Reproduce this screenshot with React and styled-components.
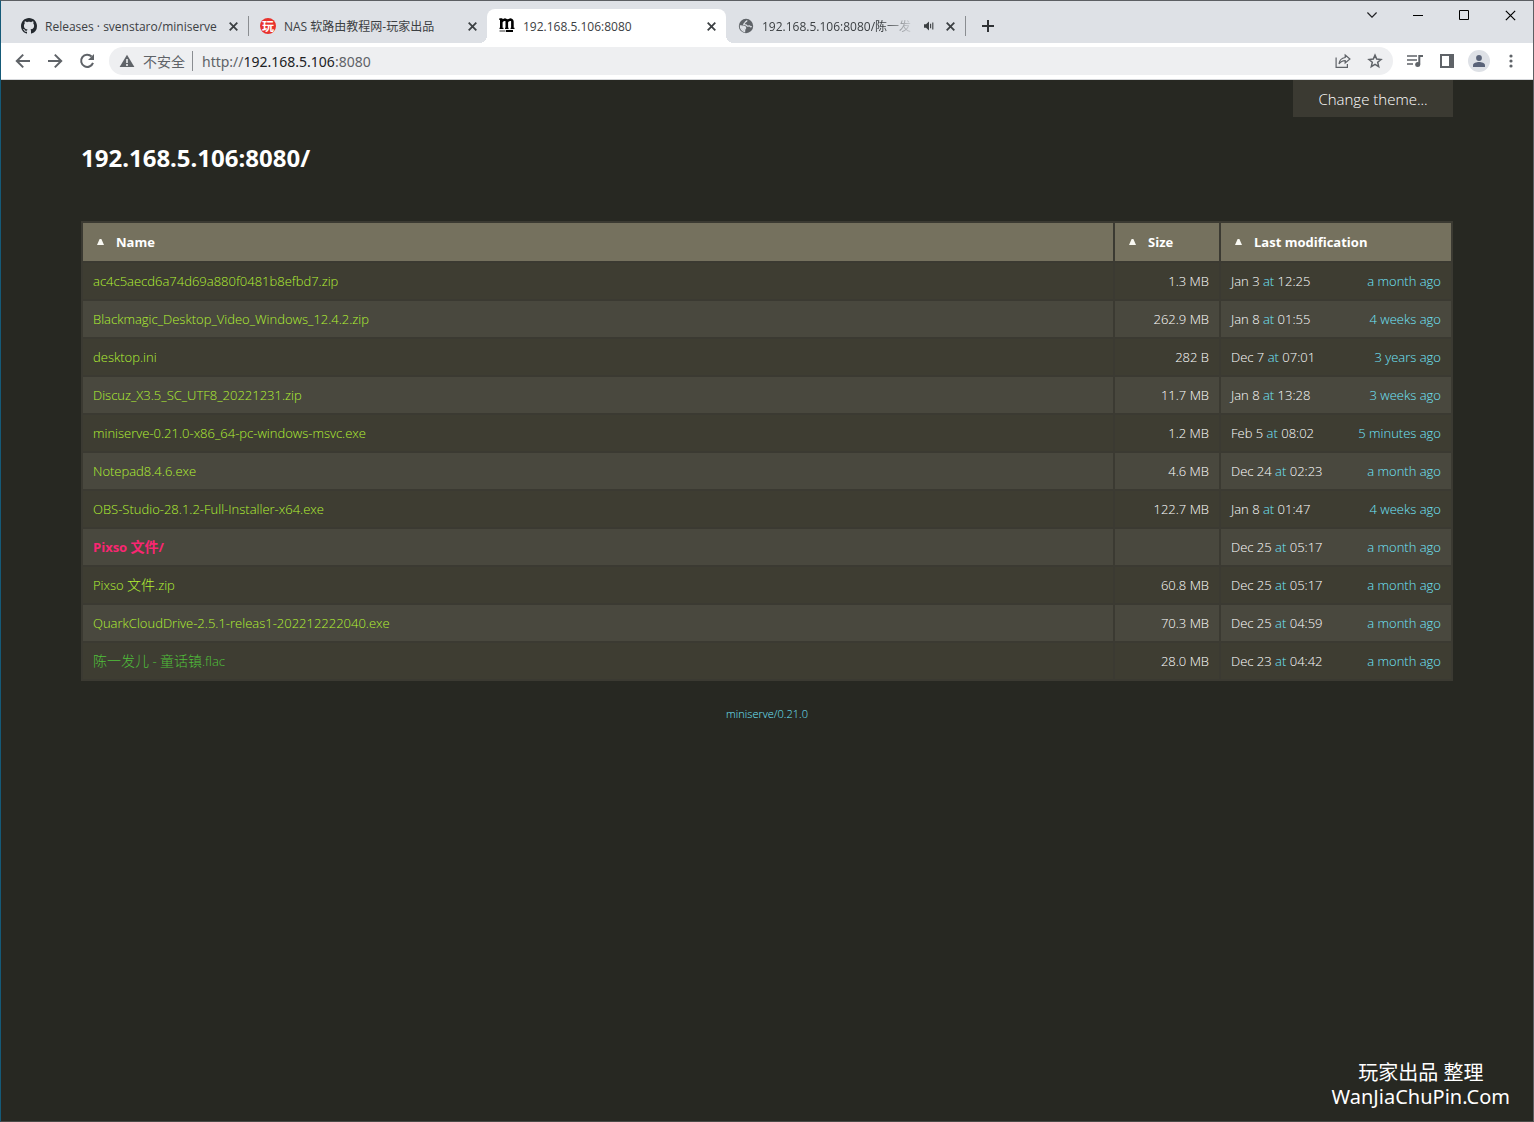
import React from 'react';
import styled, { createGlobalStyle, css } from 'styled-components';

const GlobalStyle = createGlobalStyle`
  * {
    box-sizing: border-box;
  }

  body {
    margin: 0;
    background: #272822;
    font-family: 'Open Sans', 'Noto Sans CJK SC', sans-serif;
  }

  button {
    padding: 0;
    border: 0;
    background: none;
    color: inherit;
    font: inherit;
    cursor: pointer;
  }

  a {
    text-decoration: none;
  }

  svg {
    display: block;
    flex: none;
  }
`;

const Window = styled.div`
  position: relative;
  display: flex;
  flex-direction: column;
  min-height: 100vh;
  border: 1px solid #5c5f63;
  border-left-color: #155a78;
  border-bottom-color: #4b4b48;
`;

const TabStrip = styled.header`
  display: flex;
  height: 42px;
  padding: 8px 0 0 8px;
  background: #dee1e6;
`;

const tabActive = css`
  background: #fff;
  border-radius: 8px 8px 0 0;

  &:before,
  &:after {
    content: '';
    position: absolute;
    bottom: 0;
    width: 8px;
    height: 8px;
  }

  &:before {
    right: 100%;
    background: radial-gradient(circle at 0 0, transparent 8px, #fff 8px);
  }

  &:after {
    left: 100%;
    background: radial-gradient(circle at 100% 0, transparent 8px, #fff 8px);
  }
`;

const Tab = styled.div`
  position: relative;
  display: flex;
  align-items: center;
  width: 239px;
  height: 34px;
  padding: 0 9px 0 12px;
  color: #3c4043;
  ${({ $active }) => $active && tabActive}
`;

const TabTitle = styled.span`
  flex: 1;
  margin: 0 8px;
  overflow: hidden;
  font-size: 12px;
  white-space: nowrap;
  ${({ $fade }) =>
    $fade && 'mask-image: linear-gradient(to right, #000 calc(100% - 32px), transparent);'}
`;

const TabButton = styled.button`
  display: flex;
  align-items: center;
  justify-content: center;
  width: 12px;
  height: 16px;
  margin-left: ${({ $gap }) => $gap || 0}px;
`;

const Divider = styled.span`
  align-self: center;
  width: 1px;
  height: 20px;
  margin: ${({ $margin }) => $margin || '0'};
  background: #8a8d91;
`;

const TabDivider = styled(Divider)`
  position: absolute;
  right: -1px;
`;

const NewTab = styled.button`
  display: flex;
  align-items: center;
  justify-content: center;
  width: 28px;
  height: 34px;
  margin-left: 9px;
`;

const WindowControls = styled.div`
  display: flex;
  height: 12px;
  margin-left: auto;

  button {
    display: flex;
    align-items: center;
    justify-content: center;
    width: 46px;
  }
`;

const Toolbar = styled.div`
  display: flex;
  align-items: center;
  height: 37px;
  padding: 0 6px;
  border-bottom: 1px solid #d5d7da;
  background: #fff;
  color: #5f6368;
`;

const ToolButton = styled.button`
  display: flex;
  align-items: center;
  justify-content: center;
  width: 32px;
  height: 28px;
`;

const Avatar = styled.span`
  display: flex;
  align-items: center;
  justify-content: center;
  width: 22px;
  height: 22px;
  border-radius: 50%;
  background: #dee1e6;
`;

const Omnibox = styled.div`
  display: flex;
  flex: 1;
  align-items: center;
  height: 28px;
  margin: 0 6px;
  padding: 0 2px 0 10px;
  border-radius: 14px;
  background: #eeeff1;
  font-size: 14px;
`;

const Security = styled.span`
  margin-left: 8px;
`;

const Address = styled.span`
  flex: 1;
  font-family: 'Noto Sans', sans-serif;

  b {
    color: #202124;
    font-weight: 400;
  }
`;

const Page = styled.main`
  flex: 1;
  padding: 0 80px;
  background: #272822;
  color: #fff;
`;

const ThemeButton = styled.button`
  display: block;
  width: 160px;
  height: 37px;
  margin-left: auto;
  background: #3b3a32;
  font-size: 15px;
  font-weight: 300;
`;

const Title = styled.h1`
  margin: 23px 0 45px;
  font-family: 'Noto Sans', sans-serif;
  font-size: 24px;
  font-weight: 700;
  line-height: 36px;
`;

const FileTable = styled.table`
  width: 100%;
  border-spacing: 2px;
  table-layout: fixed;
  background: #3b3a32;
  font-size: 13px;
  font-weight: 300;
  line-height: 20px;

  th {
    height: 38px;
    padding: 0 14px;
    background: #75715e;
    font-weight: 700;
    text-align: left;
  }

  td {
    height: 36px;
    padding: 0 10px;
  }

  tbody tr {
    background: #3e3d32;
  }

  tbody tr:nth-child(even) {
    background: #49483e;
  }
`;

const Column = styled.col`
  width: ${({ $width }) => $width};
`;

const SortButton = styled.button`
  display: flex;
  align-items: center;
  gap: 12px;
`;

const linkColors = {
  file: '#b2f032',
  directory: '#f92672',
  visited: '#50c03a',
};

const FileLink = styled.a`
  color: ${({ $kind }) => linkColors[$kind]};
  font-weight: ${({ $kind }) => ($kind === 'directory' ? 700 : 300)};
`;

const Han = styled.span`
  font-size: 14px;
`;

const SizeCell = styled.td`
  text-align: right;
`;

const Modified = styled.div`
  display: flex;
  justify-content: space-between;
`;

const Muted = styled.span`
  color: #70e6fc;
`;

const Footer = styled.footer`
  padding-top: 24px;
  font-size: 11px;
  font-weight: 300;
  line-height: 18px;
  text-align: center;

  a {
    color: #70e6fc;
  }
`;

const Watermark = styled.div`
  position: absolute;
  right: 23px;
  bottom: 12px;
  color: #fff;
  font-family: 'Noto Sans', 'Noto Sans CJK SC', sans-serif;
  font-size: 20px;
  line-height: 24px;
  text-align: center;
`;

const CloseIcon = ({ size = 9, width = 1.8 }) => (
  <svg width={size} height={size} viewBox="0 0 9 9" fill="none" stroke="currentColor">
    <path d="M.7.7l7.6 7.6M8.3.7L.7 8.3" strokeWidth={width} />
  </svg>
);

const GithubIcon = () => (
  <svg width="16" height="16" viewBox="0 0 16 16" fill="#24292f">
    <path d="M8 0C3.58 0 0 3.58 0 8c0 3.54 2.29 6.53 5.47 7.59.4.07.55-.17.55-.38 0-.19-.01-.82-.01-1.49-2.01.37-2.53-.49-2.69-.94-.09-.23-.48-.94-.82-1.13-.28-.15-.68-.52-.01-.53.63-.01 1.08.58 1.23.82.72 1.21 1.87.87 2.33.66.07-.52.28-.87.51-1.07-1.78-.2-3.64-.89-3.64-3.95 0-.87.31-1.59.82-2.15-.08-.2-.36-1.02.08-2.12 0 0 .67-.21 2.2.82.64-.18 1.32-.27 2-.27s1.36.09 2 .27c1.53-1.04 2.2-.82 2.2-.82.44 1.1.16 1.92.08 2.12.51.56.82 1.27.82 2.15 0 3.07-1.87 3.75-3.65 3.95.29.25.54.73.54 1.48 0 1.07-.01 1.93-.01 2.2 0 .21.15.46.55.38A8.01 8.01 0 0 0 16 8c0-4.42-3.58-8-8-8z" />
  </svg>
);

const NasIcon = styled.span`
  display: flex;
  align-items: center;
  justify-content: center;
  width: 16px;
  height: 16px;
  border-radius: 50%;
  background: #e8322d;
  color: #fff;
  font-family: 'Noto Sans CJK SC', sans-serif;
  font-size: 12px;
  font-weight: 700;
  line-height: 16px;
`;

const MiniserveIcon = () => (
  <svg width="16" height="16" viewBox="0 0 16 16" fill="none" stroke="#000">
    <path
      d="M2.3.5v10M2.3 4C3.500 1.200 7.600.8 7.800 3.500v7M7.800 4C9 1.200 13.200.8 13.400 3.500v7"
      strokeWidth="2.6"
    />
    <path d="M0 1.100h3M.5 10.300h4M6 10.300h3.600M11.600 10.300h3.900" strokeWidth="1.2" />
    <path d="M.5 13h6" stroke="#999" strokeWidth="2" />
    <path d="M7 13h7" strokeWidth="2" />
  </svg>
);

const GlobeIcon = () => (
  <svg width="16" height="16" viewBox="0 0 16 16">
    <circle cx="8" cy="8" r="7.2" fill="#5f6368" />
    <path
      d="M2.4 7.800c1.300.1 2.400.3 3.600.6 1 .2 1.800.7 1.700 1.600-.1.800-.9.900-1 1.700l-.1 1.900A5.900 5.900 0 0 1 2.400 7.800zM9 2.400c-.1.900-.7 1.300-1.400 1.500-.7.300-.5 1-1 1.300-.5.400-1 .8-.9 1.200.3.600 1.500.2 2.300.5.800.2.8 1.100 1.600 1.300.9.100 1.200-.5 1.900-.3.700.1.600 1 1.300.9.400 0 .6-.2.800-.6"
      fill="none"
      stroke="#dee1e6"
      strokeWidth="1.2"
    />
    <path d="M2.6 8l4.600 1-.8 4.200A5.800 5.800 0 0 1 2.600 8z" fill="#dee1e6" />
  </svg>
);

const SpeakerIcon = () => (
  <svg width="12" height="12" viewBox="0 0 12 12" fill="none" stroke="currentColor">
    <path d="M1 4.2h2L6 1.5v9L3 7.8H1z" fill="currentColor" stroke="none" />
    <path d="M7.6 3.8v4.4M9.8 2.6v6.8" strokeWidth="1.1" />
  </svg>
);

const PlusIcon = () => (
  <svg width="12" height="12" viewBox="0 0 12 12" stroke="#2f3235" strokeWidth="2">
    <path d="M6 0v12M0 6h12" />
  </svg>
);

const BackIcon = () => (
  <svg width="16" height="16" viewBox="0 0 16 16" fill="none" stroke="#5f6368" strokeWidth="2">
    <path d="M15 8H2M8.2 1.6L1.8 8l6.4 6.4" />
  </svg>
);

const ForwardIcon = () => (
  <svg width="16" height="16" viewBox="0 0 16 16" fill="none" stroke="#5f6368" strokeWidth="2">
    <path d="M1 8h13M7.8 1.6L14.2 8l-6.4 6.4" />
  </svg>
);

const ReloadIcon = () => (
  <svg width="16" height="16" viewBox="0 0 16 16">
    <path d="M12.6 3.5A6.1 6.1 0 1 0 14 9.8" fill="none" stroke="#5f6368" strokeWidth="2" />
    <path d="M15 1v6H9z" fill="#5f6368" />
  </svg>
);

const WarningIcon = () => (
  <svg width="16" height="16" viewBox="0 0 16 16">
    <path d="M8 1.8L15.4 14H.6z" fill="#5f6368" />
    <path d="M8 6v4M8 11v2" stroke="#eeeff1" strokeWidth="1.6" />
  </svg>
);

const ShareIcon = () => (
  <svg width="16" height="16" viewBox="0 0 16 16" fill="none" stroke="#5f6368" strokeWidth="1.2">
    <path d="M1.1 4.5v9.900h11.300V11" />
    <path d="M10.2 2l4.7 4-4.7 4V7.600C7.400 7.600 5.600 8.500 4 10.900c.4-3.600 2.700-5.900 6.200-6.400z" />
  </svg>
);

const StarIcon = () => (
  <svg width="16" height="16" viewBox="0 0 16 16" fill="none" stroke="#5f6368" strokeWidth="1.5">
    <path d="M8 2.1l1.7 4 4.3.4-3.3 2.8 1 4.3L8 11.3l-3.7 2.3 1-4.3L2 6.500l4.3-.4z" />
  </svg>
);

const PlaylistIcon = () => (
  <svg width="16" height="16" viewBox="0 0 16 16" fill="none" stroke="#5f6368" strokeWidth="2">
    <path d="M0 3h10M0 7h10M0 11h6" strokeWidth="1.6" />
    <path d="M12.3 11.5V3H16" />
    <circle cx="10.7" cy="11.5" r="2.5" fill="#5f6368" stroke="none" />
  </svg>
);

const SidePanelIcon = () => (
  <svg width="14" height="14" viewBox="0 0 14 14">
    <path d="M0 0h14v14H0zM2 2v10h7V2z" fill="#5f6368" fillRule="evenodd" />
  </svg>
);

const PersonIcon = () => (
  <svg width="12" height="12" viewBox="0 0 12 12" fill="#5a6378">
    <circle cx="6" cy="3" r="2.9" />
    <path d="M0 12v-1.800C0 8 3.500 7 6 7s6 1 6 3.200V12z" />
  </svg>
);

const MenuIcon = () => (
  <svg width="4" height="14" viewBox="0 0 4 14" fill="#5f6368">
    <circle cx="2" cy="2" r="1.6" />
    <circle cx="2" cy="7" r="1.6" />
    <circle cx="2" cy="12" r="1.6" />
  </svg>
);

const ChevronIcon = () => (
  <svg width="10" height="6" viewBox="0 0 10 6" fill="none" stroke="#202124" strokeWidth="1.2">
    <path d="M.4.5L5 5.200 9.600.5" />
  </svg>
);

const MinimizeIcon = () => (
  <svg width="10" height="10" viewBox="0 0 10 10" fill="#000">
    <path d="M0 5h10v1H0z" />
  </svg>
);

const MaximizeIcon = () => (
  <svg width="10" height="10" viewBox="0 0 10 10" fill="none" stroke="#000">
    <path d="M.5.5h9v9h-9z" />
  </svg>
);

const SortIcon = () => (
  <svg width="7" height="6" viewBox="0 0 7 6" fill="#f8f8f2">
    <path d="M2.600 0h1.800L7 6H0z" />
  </svg>
);

const tabs = [
  { title: 'Releases · svenstaro/miniserve', icon: <GithubIcon />, divider: true },
  { title: 'NAS 软路由教程网-玩家出品', icon: <NasIcon>玩</NasIcon> },
  { title: '192.168.5.106:8080', icon: <MiniserveIcon />, active: true },
  {
    title: '192.168.5.106:8080/陈一发',
    icon: <GlobeIcon />,
    divider: true,
    audio: true,
  },
];

const files = [
  ['ac4c5aecd6a74d69a880f0481b8efbd7.zip', '1.3 MB', 'Jan 3', '12:25', 'a month ago'],
  ['Blackmagic_Desktop_Video_Windows_12.4.2.zip', '262.9 MB', 'Jan 8', '01:55', '4 weeks ago'],
  ['desktop.ini', '282 B', 'Dec 7', '07:01', '3 years ago'],
  ['Discuz_X3.5_SC_UTF8_20221231.zip', '11.7 MB', 'Jan 8', '13:28', '3 weeks ago'],
  ['miniserve-0.21.0-x86_64-pc-windows-msvc.exe', '1.2 MB', 'Feb 5', '08:02', '5 minutes ago'],
  ['Notepad8.4.6.exe', '4.6 MB', 'Dec 24', '02:23', 'a month ago'],
  ['OBS-Studio-28.1.2-Full-Installer-x64.exe', '122.7 MB', 'Jan 8', '01:47', '4 weeks ago'],
  ['Pixso 文件/', '', 'Dec 25', '05:17', 'a month ago', 'directory'],
  ['Pixso 文件.zip', '60.8 MB', 'Dec 25', '05:17', 'a month ago'],
  ['QuarkCloudDrive-2.5.1-releas1-202212222040.exe', '70.3 MB', 'Dec 25', '04:59', 'a month ago'],
  ['陈一发儿 - 童话镇.flac', '28.0 MB', 'Dec 23', '04:42', 'a month ago', 'visited'],
];

const columns = ['Name', 'Size', 'Last modification'];

// Chinese runs are set one size larger than the Latin text around them
const renderName = name =>
  name
    .split(/([\u4e00-\u9fff]+)/)
    .map((part, i) => (i % 2 ? <Han key={i}>{part}</Han> : part));

const BrowserTab = ({ title, icon, active, divider, audio }) => (
  <Tab $active={active}>
    {icon}
    <TabTitle $fade={audio}>{title}</TabTitle>
    {audio && (
      <TabButton aria-label="Mute tab">
        <SpeakerIcon />
      </TabButton>
    )}
    <TabButton aria-label="Close tab" $gap={audio ? 9 : 0}>
      <CloseIcon />
    </TabButton>
    {divider && <TabDivider />}
  </Tab>
);

const BrowserToolbar = () => (
  <Toolbar>
    <ToolButton aria-label="Back">
      <BackIcon />
    </ToolButton>
    <ToolButton aria-label="Forward">
      <ForwardIcon />
    </ToolButton>
    <ToolButton aria-label="Reload">
      <ReloadIcon />
    </ToolButton>
    <Omnibox>
      <WarningIcon />
      <Security>不安全</Security>
      <Divider $margin="0 9px 0 7px" />
      <Address>
        http://<b>192.168.5.106</b>:8080
      </Address>
      <ToolButton aria-label="Share">
        <ShareIcon />
      </ToolButton>
      <ToolButton aria-label="Bookmark">
        <StarIcon />
      </ToolButton>
    </Omnibox>
    <ToolButton aria-label="Media">
      <PlaylistIcon />
    </ToolButton>
    <ToolButton aria-label="Side panel">
      <SidePanelIcon />
    </ToolButton>
    <ToolButton aria-label="Profile">
      <Avatar>
        <PersonIcon />
      </Avatar>
    </ToolButton>
    <ToolButton aria-label="Menu">
      <MenuIcon />
    </ToolButton>
  </Toolbar>
);

const FileRow = ({ file }) => {
  const [name, size, date, time, ago, kind = 'file'] = file;

  return (
    <tr>
      <td>
        <FileLink href="#" $kind={kind}>
          {renderName(name)}
        </FileLink>
      </td>
      <SizeCell>{size}</SizeCell>
      <td>
        <Modified>
          <span>
            {date} <Muted>at</Muted> {time}
          </span>
          <Muted>{ago}</Muted>
        </Modified>
      </td>
    </tr>
  );
};

const App = () => (
  <>
    <GlobalStyle />
    <Window>
      <TabStrip>
        {tabs.map(tab => (
          <BrowserTab key={tab.title} {...tab} />
        ))}
        <NewTab aria-label="New tab">
          <PlusIcon />
        </NewTab>
        <WindowControls>
          <button aria-label="Search tabs">
            <ChevronIcon />
          </button>
          <button aria-label="Minimize">
            <MinimizeIcon />
          </button>
          <button aria-label="Maximize">
            <MaximizeIcon />
          </button>
          <button aria-label="Close">
            <CloseIcon size={11} width={1} />
          </button>
        </WindowControls>
      </TabStrip>
      <BrowserToolbar />

      <Page>
        <ThemeButton>Change theme...</ThemeButton>
        <Title>192.168.5.106:8080/</Title>
        <FileTable>
          <colgroup>
            <Column $width="auto" />
            <Column $width="104px" />
            <Column $width="230px" />
          </colgroup>
          <thead>
            <tr>
              {columns.map(column => (
                <th key={column} scope="col">
                  <SortButton>
                    <SortIcon />
                    {column}
                  </SortButton>
                </th>
              ))}
            </tr>
          </thead>
          <tbody>
            {files.map(file => (
              <FileRow key={file[0]} file={file} />
            ))}
          </tbody>
        </FileTable>
        <Footer>
          <a href="#">miniserve/0.21.0</a>
        </Footer>
      </Page>

      <Watermark>
        玩家出品 整理
        <br />
        WanJiaChuPin.Com
      </Watermark>
    </Window>
  </>
);

export default App;
